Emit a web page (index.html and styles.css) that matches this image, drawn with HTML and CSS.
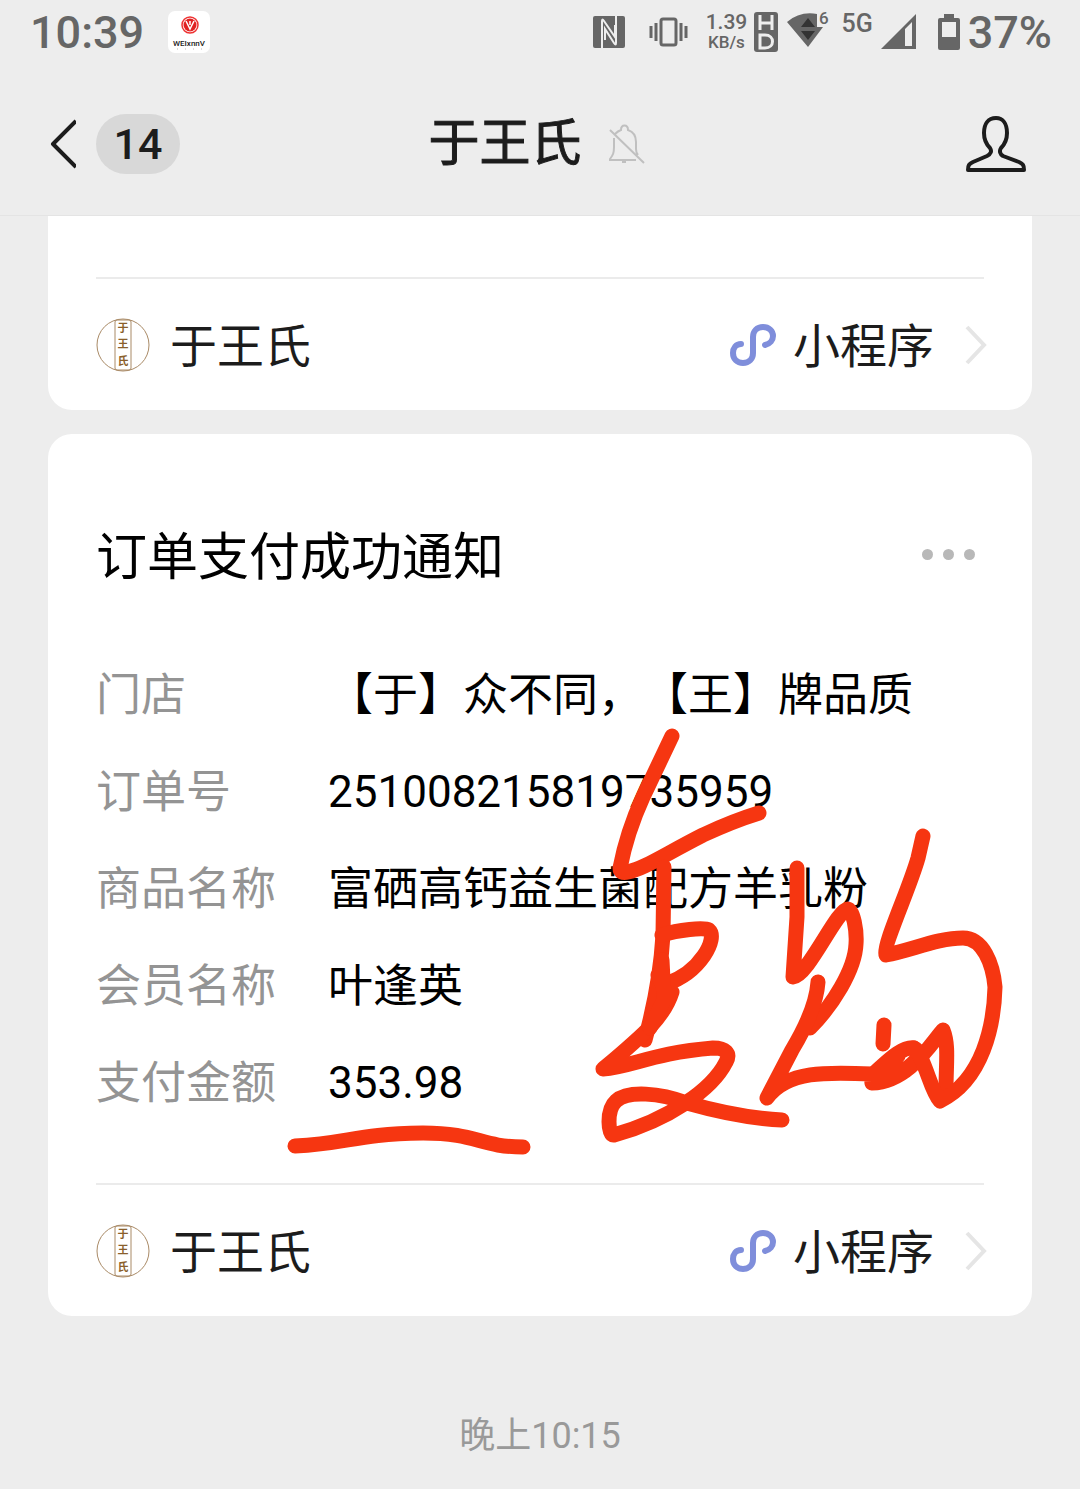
FILE: index.html
```html
<!DOCTYPE html>
<html lang="zh-CN">
<head>
<meta charset="utf-8">
<meta name="viewport" content="width=device-width, initial-scale=1">
<title>于王氏</title>
<link rel="stylesheet" href="styles.css">
</head>
<body>
<div class="status">
  <time class="clock">10:39</time>
  <svg class="app" width="42" height="42" viewBox="0 0 42 42" aria-hidden="true">
    <rect width="42" height="42" rx="7" fill="#fff"/>
    <circle cx="22" cy="14" r="8" fill="#fff" stroke="#e33" stroke-width="1.500"/>
    <circle cx="22" cy="14" r="6.500" fill="#e02222"/>
    <path d="M18 10L22 18L26 10M22 10V14" fill="none" stroke="#fff" stroke-width="1.500"/>
    <text x="21" y="35" text-anchor="middle" font-family="Roboto" font-size="8" font-weight="500" fill="#222">WEIxnnV</text>
    <path d="M9 38H37" stroke="#bbb" stroke-dasharray="1 7"/>
  </svg>
  <div class="indicators">
    <svg class="nfc" width="32" height="32" viewBox="0 0 32 32" aria-hidden="true">
      <rect width="32" height="32" rx="2" fill="#666"/>
      <path d="M9 32V5Q9 2 11 5L22 21V9M23 0V27Q23 30 21 27L12 13V24" fill="none" stroke="#eee" stroke-width="2"/>
    </svg>
    <svg class="vibrate" width="39" height="30" viewBox="0 0 39 30" aria-hidden="true">
      <rect x="12" y="2" width="15" height="26" rx="2" fill="none" stroke="#666" stroke-width="3"/>
      <path d="M2 9V21M7 6V24M32 6V24M37 9V21" stroke="#666" stroke-width="3"/>
    </svg>
    <div class="speed"><span class="rate">1.39</span><span class="unit">KB/s</span></div>
    <svg class="hd" width="24" height="40" viewBox="0 0 24 40" aria-hidden="true">
      <rect width="24" height="40" rx="3" fill="#666"/>
      <path d="M6 3V18M18 3V18M6 11H18M6 23V36H11C21 36 21 23 11 23Z" fill="none" stroke="#eee" stroke-width="3"/>
    </svg>
    <svg class="wifi" width="42" height="36" viewBox="0 0 42 36" aria-hidden="true">
      <path d="M0 10Q13 -1 30 2V15H36L21 35Z" fill="#666"/>
      <path d="M14 15L21 6L28 15ZM14 19H28L21 28Z" fill="#333"/>
      <text x="32" y="12" font-family="Roboto" font-size="17" font-weight="500" fill="#666">6</text>
    </svg>
    <span class="network">5G</span>
    <svg class="signal" width="35" height="36" viewBox="0 0 35 36" aria-hidden="true">
      <path d="M0 35L35 0V35ZM24 15V32H31V8Z" fill="#666" fill-rule="evenodd"/>
    </svg>
    <svg class="battery" width="22" height="36" viewBox="0 0 22 36" aria-hidden="true">
      <path d="M2 4H6V0H16V4H20Q22 4 22 6V34Q22 36 20 36H2Q0 36 0 34V6Q0 4 2 4ZM4 8V23H18V8Z" fill="#666" fill-rule="evenodd"/>
    </svg>
    <span class="percent">37%</span>
  </div>
</div>

<header class="bar">
  <button class="back" type="button" aria-label="返回">
    <svg width="28" height="52" viewBox="0 0 28 52" aria-hidden="true"><path d="M28 3L5 26L28 49" fill="none" stroke="#1c1c1c" stroke-width="4" stroke-linejoin="round"/></svg>
    <span class="count">14</span>
  </button>
  <h1 class="name">于王氏
    <svg width="38" height="40" viewBox="0 0 38 40" aria-hidden="true">
      <path d="M2 6L36 39M6 14V23C6 29 5 31 2 35V36H28M7 10Q10 7 13 6C13 0 20 0 20 6C26 8 28 12 28 18V25Q28 29 30 31M14 38H18" fill="none" stroke="#c0c0c0" stroke-width="2"/>
    </svg>
  </h1>
  <button class="profile" type="button" aria-label="个人资料">
    <svg width="60" height="56" viewBox="0 0 60 56" aria-hidden="true"><path d="M30 2C22 2 18 8 18 17C18 24 21 29 24 32C26 35 25 38 21 40L7 46C3 48 2 49 2 54H58C58 49 57 48 53 46L37 40C34 38 33 35 35 32C39 28 41 24 41 17C41 8 37 2 30 2Z" fill="none" stroke="#1c1c1c" stroke-width="4" stroke-linejoin="round"/></svg>
  </button>
</header>

<main class="chat">
  <section class="card card-top">
    <a class="source" href="#">
      <svg class="seal" width="54" height="54" viewBox="0 0 54 54" aria-hidden="true">
        <circle cx="27" cy="27" r="26"/>
        <rect x="19" y="2" width="16" height="50" rx="2"/>
        <text x="27" y="14">于</text><text x="27" y="30">王</text><text x="27" y="47">氏</text>
      </svg>
      <span class="brand">于王氏</span>
      <svg width="48" height="44" viewBox="0 0 48 44" aria-hidden="true"><path d="M12 21C7 21 4 25 4 30C4 36 8 40 14 40C20 40 24 36 24 30V14C24 8 28 4 34 4C40 4 44 8 44 13C44 17 41 21 36 22" fill="none" stroke="#7f8edb" stroke-width="6" stroke-linecap="round"/></svg>
      <span class="kind">小程序</span>
      <svg class="next" width="24" height="42" viewBox="0 0 24 42" aria-hidden="true"><path d="M3 3L20 21L3 39" fill="none" stroke="#e5e5e5" stroke-width="4"/></svg>
    </a>
  </section>

  <section class="card order">
    <div class="heading">
      <h2>订单支付成功通知</h2>
      <button class="more" type="button" aria-label="更多"><i></i><i></i><i></i></button>
    </div>
    <dl class="details">
      <dt>门店</dt><dd>【于】众不同，【王】牌品质</dd>
      <dt>订单号</dt><dd class="number">251008215819735959</dd>
      <dt>商品名称</dt><dd>富硒高钙益生菌配方羊乳粉</dd>
      <dt>会员名称</dt><dd>叶逢英</dd>
      <dt>支付金额</dt><dd class="number">353.98</dd>
    </dl>
    <a class="source" href="#">
      <svg class="seal" width="54" height="54" viewBox="0 0 54 54" aria-hidden="true">
        <circle cx="27" cy="27" r="26"/>
        <rect x="19" y="2" width="16" height="50" rx="2"/>
        <text x="27" y="14">于</text><text x="27" y="30">王</text><text x="27" y="47">氏</text>
      </svg>
      <span class="brand">于王氏</span>
      <svg width="48" height="44" viewBox="0 0 48 44" aria-hidden="true"><path d="M12 21C7 21 4 25 4 30C4 36 8 40 14 40C20 40 24 36 24 30V14C24 8 28 4 34 4C40 4 44 8 44 13C44 17 41 21 36 22" fill="none" stroke="#7f8edb" stroke-width="6" stroke-linecap="round"/></svg>
      <span class="kind">小程序</span>
      <svg class="next" width="24" height="42" viewBox="0 0 24 42" aria-hidden="true"><path d="M3 3L20 21L3 39" fill="none" stroke="#e5e5e5" stroke-width="4"/></svg>
    </a>
    <svg class="ink" width="780" height="460" viewBox="240 720 780 460" aria-hidden="true">
      <g fill="none" stroke="#f63611" stroke-width="15" stroke-linecap="round" stroke-linejoin="round">
        <path d="M295 1146C350 1143 355 1134 423 1133C477 1133 480 1147 523 1147"/>
        <path d="M672 736L643 797Q627 832 620 868Q620 874 628 872C645 868 662 856 703 835Q733 821 759 813"/>
        <path d="M664 867L663 935Q660 985 645 1040"/>
        <path d="M662 935C678 930 704 927 709 930C718 938 701 972 666 984L672 992C664 1018 642 1036 603 1069C632 1067 652 1053 713 1048C725 1048 731 1053 726 1062C712 1090 668 1120 614 1135C608 1136 606 1110 616 1101C628 1090 660 1093 687 1103Q740 1118 782 1120"/>
        <path d="M662 960L664 1000L650 1028M658 975L668 998"/>
        <path d="M797 868L797 917L793 977C808 976 837 909 848 909C853 910 857 930 856 944C855 970 832 1006 810 1028"/>
        <path d="M818 982Q816 1010 792 1050L767 1098C787 1070 828 1072 873 1074C884 1065 901 1046 914 1048C933 1057 886 1084 872 1083C870 1078 888 1066 898 1056M872 1083C909 1082 932 1042 943 1030C949 1045 946 1063 946 1090"/>
        <path d="M914 1048C926 1060 930 1090 940 1101C983 1080 994 1025 995 987C993 964 983 938 963 938C938 938 912 950 886 955C882 947 909 890 918 858L923 836"/>
        <path d="M884 1025L883 1044"/>
      </g>
    </svg>
  </section>

  <time class="stamp">晚上10:15</time>
</main>
</body>
</html>
```

FILE: styles.css
```css
* {
  box-sizing: border-box;
}

body {
  margin: 0;
  min-height: 100vh;
  background: #ededed;
  color: #1c1c1c;
  font-family: Roboto, "Noto Sans CJK SC", sans-serif;
  font-size: 45px;
  text-spacing-trim: space-all;
}

svg {
  display: block;
  flex: none;
}

button {
  margin: 0;
  padding: 0;
  border: 0;
  background: none;
  color: inherit;
  font: inherit;
}

h1,
h2,
dl,
dd {
  margin: 0;
}

/* Status bar */
.status {
  display: flex;
  align-items: center;
  height: 64px;
  padding: 0 28px 0 30px;
  color: #666;
  font-weight: 500;
}

.app {
  margin-left: 24px;
}

.indicators {
  display: flex;
  align-items: center;
  margin-left: auto;
}

.vibrate {
  margin-left: 24px;
}

.speed {
  display: flex;
  flex-direction: column;
  align-items: center;
  width: 40px;
  margin: 0 8px 0 18px;
  font-size: 21px;
  line-height: 20px;
}

.unit {
  font-size: 17px;
}

.wifi {
  margin: 0 12px 4px 9px;
}

.network {
  margin-bottom: 16px;
  font-size: 25px;
  line-height: 32px;
}

.signal {
  margin: 0 22px 0 8px;
}

.battery {
  margin-right: 8px;
}

/* Conversation header */
.bar {
  display: grid;
  grid-template-columns: 1fr auto 1fr;
  align-items: center;
  height: 152px;
  padding: 8px 54px 0 48px;
  border-bottom: 1px solid #e4e4e4;
}

.back {
  display: flex;
  align-items: center;
  gap: 20px;
  justify-self: start;
}

.count {
  width: 84px;
  border-radius: 30px;
  background: #d8d8d8;
  font-size: 43px;
  font-weight: 500;
  line-height: 60px;
  text-align: center;
}

.name {
  display: flex;
  align-items: center;
  gap: 26px;
  font-size: 51px;
  font-weight: 400;
  line-height: 64px;
  -webkit-text-stroke: 1px #1c1c1c;
}

.profile {
  justify-self: end;
}

/* Messages */
.chat {
  display: flex;
  flex-direction: column;
  gap: 24px;
  padding: 0 48px;
}

.card {
  position: relative;
  padding: 0 48px;
  border-radius: 24px;
  background: #fff;
}

.card-top {
  padding-top: 61px;
  border-radius: 0 0 24px 24px;
}

.source {
  display: flex;
  align-items: center;
  height: 133px;
  border-top: 2px solid #ebebeb;
  color: #1c1c1c;
  font-size: 47px;
  line-height: 64px;
  text-decoration: none;
}

.seal {
  fill: none;
  stroke: #a98a66;
}

.seal text {
  fill: #8a5f2c;
  stroke: none;
  font-family: "Noto Sans CJK SC", sans-serif;
  font-size: 11px;
  font-weight: 700;
  text-anchor: middle;
}

.brand,
.kind {
  padding-top: 4px;
}

.brand {
  flex: 1;
  margin-left: 20px;
}

.kind {
  margin-left: 16px;
}

.next {
  margin: 0 -4px 0 30px;
}

.heading {
  display: flex;
  align-items: center;
  justify-content: space-between;
  padding: 84px 9px 0 0;
}

.heading h2 {
  padding-top: 8px;
  color: #000;
  font-size: 51px;
  font-weight: 400;
  line-height: 64px;
}

.more {
  display: flex;
  gap: 10px;
}

.more i {
  width: 11px;
  height: 11px;
  border-radius: 50%;
  background: #b8b8b8;
}

.details {
  display: grid;
  grid-template-columns: 180px 1fr;
  column-gap: 52px;
  padding: 57px 0 51px;
  line-height: 97px;
}

.details dt {
  color: #949494;
}

.details dd {
  color: #000;
}

.details .number {
  font-size: 44px;
}

/* Handwritten marks over the order card */
.ink {
  position: absolute;
  top: 286px;
  left: 192px;
  pointer-events: none;
}

.stamp {
  margin-top: 72px;
  color: #999;
  font-size: 36px;
  line-height: 48px;
  text-align: center;
}
```
